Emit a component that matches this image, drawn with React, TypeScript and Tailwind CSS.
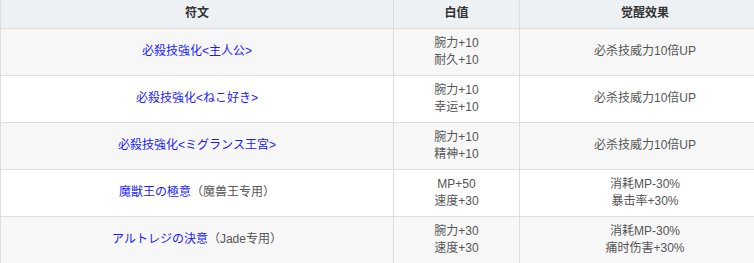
import React from "react";

interface RuneRow {
  name: string;
  note?: string;
  stats: string[];
  effects: string[];
}

const rows: RuneRow[] = [
  { name: "必殺技強化<主人公>", stats: ["腕力+10", "耐久+10"], effects: ["必杀技威力10倍UP"] },
  { name: "必殺技強化<ねこ好き>", stats: ["腕力+10", "幸运+10"], effects: ["必杀技威力10倍UP"] },
  { name: "必殺技強化<ミグランス王宮>", stats: ["腕力+10", "精神+10"], effects: ["必杀技威力10倍UP"] },
  { name: "魔獣王の極意", note: "（魔兽王专用）", stats: ["MP+50", "速度+30"], effects: ["消耗MP-30%", "暴击率+30%"] },
  { name: "アルトレジの決意", note: "（Jade专用）", stats: ["腕力+30", "速度+30"], effects: ["消耗MP-30%", "痛时伤害+30%"] },
];

const App: React.FC = () => {
  return (
    <div
      className="w-[754px] h-[263px] overflow-hidden bg-white"
      style={{ fontFamily: '"Liberation Sans", "Noto Sans CJK SC", sans-serif' }}
    >
      <table className="w-[770px] table-fixed border-collapse text-[12px] leading-[17px] text-[#555]">
        <colgroup>
          <col className="w-[393px]" />
          <col className="w-[126px]" />
          <col className="w-[251px]" />
        </colgroup>
        <thead>
          <tr className="bg-[#eef1f4] h-[28px]">
            <th className="border-x border-b border-[#dddddd] font-bold text-[#333] p-0">符文</th>
            <th className="border-x border-b border-[#dddddd] font-bold text-[#333] p-0">白值</th>
            <th className="border-x border-b border-[#dddddd] font-bold text-[#333] p-0">觉醒效果</th>
          </tr>
        </thead>
        <tbody>
          {rows.map((row, i) => (
            <tr key={i} className={`h-[47px] ${i % 2 === 0 ? "bg-[#f7f7f7]" : "bg-white"}`}>
              <td className="border border-[#dddddd] text-center py-[6px] px-2">
                <span className="text-[#1a1aff]">{row.name}</span>
                {row.note && <span>{row.note}</span>}
              </td>
              <td className="border border-[#dddddd] text-center py-[6px] px-2">
                {row.stats.map((s) => (
                  <div key={s}>{s}</div>
                ))}
              </td>
              <td className="border border-[#dddddd] text-center py-[6px] px-2">
                {row.effects.map((e) => (
                  <div key={e}>{e}</div>
                ))}
              </td>
            </tr>
          ))}
        </tbody>
      </table>
    </div>
  );
};

export default App;
